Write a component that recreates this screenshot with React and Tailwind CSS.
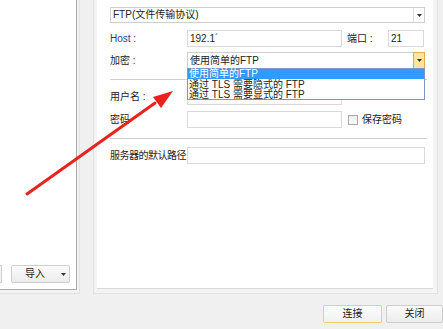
import React from "react";

const font = { fontFamily: '"Liberation Sans", "Noto Sans CJK SC", sans-serif' };

function Caret({ className = "" }) {
  return (
    <svg width="5" height="3" viewBox="0 0 5 3" className={className}>
      <path d="M0 0 L5 0 L2.5 3 Z" fill="#333" />
    </svg>
  );
}

function Input({ className = "", children }) {
  return (
    <div className={`h-[16px] border border-[#d9d9d9] bg-white flex items-center pl-[2px] text-[#222] ${className}`}>
      {children}
    </div>
  );
}

export default function App() {
  return (
    <div style={font} className="relative w-[443px] h-[329px] bg-[#f0f0f0] overflow-hidden text-[10px] leading-none text-[#222]">
      <div className="flex h-[294px]">
        {/* left panel */}
        <div className="w-[80px] h-[294px] border-r border-b border-[#e2e2e2] bg-[#f3f3f3]">
          <div className="w-[77px] h-[290px] bg-white border-r border-b border-[#a9a9a9] relative">
            <div className="absolute left-0 bottom-[6px] flex gap-[9px]">
              <div className="w-[2px] h-[18px] border border-l-0 border-[#cfcfcf] bg-[#f4f4f4]" />
              <div className="w-[59px] h-[18px] border border-[#cfcfcf] rounded-[2px] bg-gradient-to-b from-[#fbfbfb] to-[#ececec] flex items-center pl-[13px] gap-[16px]">
                <span className="text-[10px]">导入</span>
                <Caret />
              </div>
            </div>
          </div>
        </div>
        <div className="w-[13px]" />
        {/* right panel */}
        <div className="w-[345px] h-[294px] border-l border-r border-b border-[#e2e2e2] bg-[#f3f3f3] pl-[3px] pr-[4px] pb-[5px]">
          <div className="h-[289px] bg-white border-b border-[#dcdcdc] pl-[13px] pr-[8px] pt-[7px] flex flex-col">
            <div className="h-[16px] w-[315px] border border-[#cfcfcf] flex items-center justify-between pl-[2px]">
              <span>FTP(文件传输协议)</span>
              <div className="h-full w-[11px] border-l border-[#dedede] flex items-center justify-center">
                <Caret />
              </div>
            </div>
            <div className="flex items-center mt-[7px] h-[17px]">
              <span className="w-[77px] text-[#1f3f8a]">Host :</span>
              <Input className="w-[155px] h-[17px]">192.1´</Input>
              <span className="w-[46px] pl-[5px]">端口 :</span>
              <Input className="w-[36px] h-[17px]">21</Input>
            </div>
            <div className="flex items-center mt-[5px] h-[17px]">
              <span className="w-[77px]">加密 :</span>
              <div className="w-[238px] h-[17px] border border-[#cfcfcf] flex items-center justify-between pl-[2px]">
                <span>使用简单的FTP</span>
                <div className="h-[17px] w-[12px] -mr-px border border-[#e7a64f] bg-[#fde4a0] flex items-center justify-center">
                  <Caret />
                </div>
              </div>
            </div>
            <div className="mt-[10px] h-px w-[317px] bg-[#cfcfcf]" />
            <div className="flex items-center mt-[9px] h-[16px]">
              <span className="w-[77px]">用户名 :</span>
              <Input className="w-[155px]" />
            </div>
            <div className="flex items-center mt-[6px] h-[17px]">
              <span className="w-[77px]">密码</span>
              <Input className="w-[155px] h-[17px]" />
              <div className="ml-[6px] w-[10px] h-[10px] border border-[#a8a8a8] bg-gradient-to-b from-[#eeeeee] to-[#f9f9f9]" />
              <span className="ml-[4px]">保存密码</span>
            </div>
            <div className="mt-[10px] h-px w-[317px] bg-[#cfcfcf]" />
            <div className="flex items-center mt-[8px] h-[17px]">
              <span className="w-[77px] whitespace-nowrap tracking-[-0.5px]">服务器的默认路径</span>
              <Input className="w-[238px] h-[17px]" />
            </div>
          </div>
        </div>
      </div>
      {/* bottom buttons */}
      <div className="flex justify-end gap-[4px] pt-[11px] pr-0">
        <div className="w-[59px] h-[18px] border border-[#f0cf6c] rounded-[2px] bg-gradient-to-b from-[#fdfdfd] to-[#f1f1f1] flex items-center justify-center">连接</div>
        <div className="w-[57px] h-[18px] border border-[#cdcdcd] rounded-[2px] bg-gradient-to-b from-[#fbfbfb] to-[#ececec] flex items-center justify-center">关闭</div>
      </div>

      {/* dropdown list overlay */}
      <div className="absolute left-[187px] top-[68px] w-[238px] h-[32px] bg-white border border-[#7d97c4] flex flex-col text-[10px] leading-[10px]">
        <div className="h-[10px] bg-[#3399ff] text-white pl-[1px]">使用简单的FTP</div>
        <div className="h-[10px] pl-[1px] mt-[1px]">通过 TLS 需要隐式的 FTP</div>
        <div className="h-[10px] pl-[1px]">通过 TLS 需要显式的 FTP</div>
      </div>

      {/* red arrow */}
      <svg className="absolute left-0 top-0" width="443" height="329" viewBox="0 0 443 329">
        <path d="M27 194 L155 103" stroke="#e8231d" strokeWidth="3" strokeLinecap="round" />
        <path d="M173 91 L153 97 L161 108 Z" fill="#e8231d" />
      </svg>
    </div>
  );
}
